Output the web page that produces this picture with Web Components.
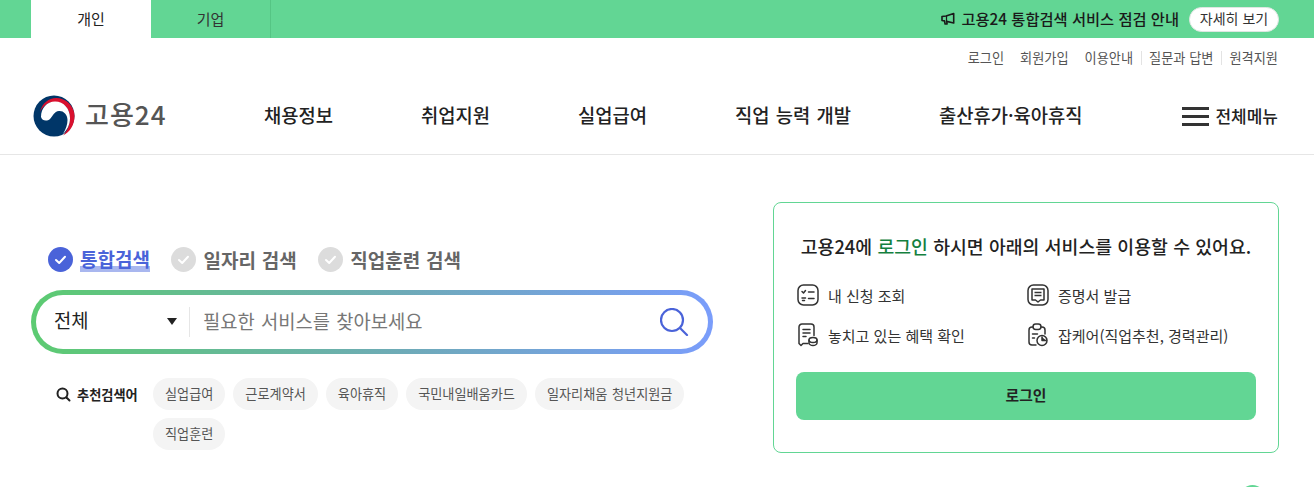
<!DOCTYPE html>
<html lang="ko">
<head>
<meta charset="utf-8">
<title>고용24</title>
<style>
  html, body { margin: 0; height: 487px; overflow: hidden; background: #fff; }
  body { font-family: "Noto Sans CJK KR", "Noto Sans", sans-serif; color: #222; }
</style>
</head>
<body>
<top-bar></top-bar>
<util-links></util-links>
<main-header></main-header>
<main-section>
  <search-panel></search-panel>
  <login-card></login-card>
</main-section>
<float-button></float-button>

<script>
class TopBar extends HTMLElement {
  connectedCallback() {
    this.attachShadow({ mode: 'open' }).innerHTML = `
      <style>
        :host { display: flex; height: 38px; background: #62d694; padding: 0 35px 0 31px; align-items: stretch; justify-content: space-between; }
        .tabs { display: flex; }
        .tab { width: 120px; display: flex; align-items: center; justify-content: center; font-size: 15px; color: #333; padding-bottom: 2px; box-sizing: border-box; }
        .tab.on { background: #fff; color: #222; }
        .tab.off { border-right: 1px solid #55c584; }
        .notice { display: flex; align-items: center; font-size: 15.3px; font-weight: 500; color: #1a1a1a; }
        .notice span { padding-bottom: 2px; }
        svg { margin-right: 5px; }
        button { margin-left: 10px; height: 25px; width: 90px; padding: 0 0 2px; border: 1px solid #dfe6e2; border-radius: 13px; background: #fff; font: inherit; font-weight: 400; font-size: 14px; color: #333; }
      </style>
      <div class="tabs"><div class="tab on">개인</div><div class="tab off">기업</div></div>
      <div class="notice">
        <svg width="15" height="14" viewBox="0 0 15 14" fill="none" stroke="#1a1a1a" stroke-width="1.6" stroke-linejoin="round">
          <path d="M1 4.500v4l2.500.4.6 3.100h2l-.4-2.600 7 1.600V1.500L5 4z"/><path d="M5.500 4v5.500" stroke-width="1.200"/>
        </svg>
        <span>고용24 통합검색 서비스 점검 안내</span><button>자세히 보기</button>
      </div>`;
  }
}

class UtilLinks extends HTMLElement {
  connectedCallback() {
    this.attachShadow({ mode: 'open' }).innerHTML = `
      <style>
        :host { display: flex; justify-content: flex-end; align-items: center; height: 40px; padding-right: 36px; font-size: 13.2px; color: #555; }
        a { color: inherit; text-decoration: none; margin-left: 16px; line-height: 14px; }
        a.sep { margin-left: 8px; padding-left: 7px; border-left: 1px solid #e3e3e3; }
      </style>
      <a>로그인</a><a>회원가입</a><a>이용안내</a><a class="sep">질문과 답변</a><a class="sep">원격지원</a>`;
  }
}

class MainHeader extends HTMLElement {
  connectedCallback() {
    this.attachShadow({ mode: 'open' }).innerHTML = `
      <style>
        :host { display: flex; align-items: center; height: 76px; padding: 0 36px 0 33px; border-bottom: 1px solid #e6e6e6; }
        .logo { display: flex; align-items: center; width: 231px; font-size: 26px; font-weight: 500; color: #555; letter-spacing: 1px; }
        .logo svg { margin-right: 10px; }
        .logo span { padding-bottom: 5px; }
        nav { display: flex; gap: 88px; flex: 1; font-size: 18.75px; font-weight: 500; color: #222; padding-bottom: 4px; word-spacing: 1px; }
        .all { display: flex; align-items: center; font-size: 17px; font-weight: 500; color: #222; }
        .all span { padding-bottom: 2px; }
        .all i { display: block; width: 27px; height: 19px; margin-right: 6px; border-top: 3px solid #333; border-bottom: 3px solid #333; box-sizing: border-box; position: relative; }
        .all i::after { content: ""; position: absolute; left: 0; right: 0; top: 5px; height: 3px; background: #333; }
      </style>
      <div class="logo">
        <svg width="42" height="42" viewBox="0 0 42 42">
          <circle cx="21" cy="21" r="20.5" fill="#003668"/>
          <path d="M7 17C9 8 16 3 23 3 33 3 41.500 11 41.500 21 41.500 30 37 37 30 40.500 35 35 37 29 37 23 37 13 30 7 21 7 15 7 10 11 7 17z" fill="#d9102e"/>
          <path d="M8 22C8 13 14 6.500 22 6.500 31 6.500 37 14 37 23 37 30 34 35 30 39 33 34 34.500 29 34.500 25 34.500 19 30 15.500 26 16 21 16.500 20 21 17 24 14 26.500 9 26 8 22z" fill="#fff"/>
        </svg>
        <span>고용24</span>
      </div>
      <nav><span>채용정보</span><span>취업지원</span><span>실업급여</span><span>직업 능력 개발</span><span>출산휴가·육아휴직</span></nav>
      <div class="all"><i></i><span>전체메뉴</span></div>`;
  }
}

class MainSection extends HTMLElement {
  connectedCallback() {
    this.attachShadow({ mode: 'open' }).innerHTML = `
      <style>
        :host { display: grid; grid-template-columns: 679px 506px; column-gap: 61px; align-items: start; padding: 47px 0 0 33px; }
      </style>
      <slot></slot>`;
  }
}

class SearchPanel extends HTMLElement {
  connectedCallback() {
    const chips = ['실업급여', '근로계약서', '육아휴직', '국민내일배움카드', '일자리채움 청년지원금', '직업훈련'];
    this.attachShadow({ mode: 'open' }).innerHTML = `
      <style>
        :host { display: block; padding-top: 42px; }
        .types { display: flex; align-items: center; height: 30px; margin: 0 0 16px 15px; gap: 21.500px; font-size: 19px; font-weight: 700; color: #666; word-spacing: .6px; }
        .type { display: flex; align-items: center; gap: 7px; }
        .type svg { flex: none; }
        .on span { color: #4a63d9; background: linear-gradient(transparent 78%, #a9b7ef 78%); line-height: 26px; }
        .box { height: 64px; box-sizing: border-box; border: 5px solid transparent; border-radius: 32px; margin: 0 -1px 0 -2px;
          background: linear-gradient(#fff, #fff) padding-box, linear-gradient(90deg, #5ccb71 0%, #6eaab8 55%, #7a9dfb 100%) border-box;
          display: flex; align-items: center; }
        .sel { width: 123px; padding: 0 12px 0 18px; display: flex; align-items: center; justify-content: space-between; font-size: 18.75px; color: #222; border-right: 1px solid #e6e6e6; height: 30px; }
        .sel span { padding-bottom: 5px; }
        .sel b { width: 0; height: 0; border: 5px solid transparent; border-top: 7px solid #222; border-bottom: 0; margin-top: -1px; }
        .ph { flex: 1; padding: 0 0 4px 13px; font-size: 18.75px; color: #777; word-spacing: 1px; }
        .glass { margin-right: 19px; display: block; }
        .rec { display: flex; margin: 24px 0 0 23px; align-items: flex-start; }
        .label { display: flex; align-items: center; gap: 6px; height: 32px; width: 97px; flex: none; font-size: 13.2px; font-weight: 700; color: #222; white-space: nowrap; }
        .chips { display: flex; flex-wrap: wrap; gap: 8px; width: 550px; }
        .chip { height: 32px; line-height: 32px; padding: 0 12px; border-radius: 16px; background: #f4f4f4; font-size: 13.15px; color: #555; word-spacing: 1px; }
      </style>
      <div class="types">
        <div class="type on">${this.check('#4a63d9', '#fff')}<span>통합검색</span></div>
        <div class="type">${this.check('#dcdcdc', '#fff')}<span>일자리 검색</span></div>
        <div class="type">${this.check('#dcdcdc', '#fff')}<span>직업훈련 검색</span></div>
      </div>
      <div class="box">
        <div class="sel"><span>전체</span><b></b></div>
        <div class="ph">필요한 서비스를 찾아보세요</div>
        <svg class="glass" width="29" height="28" viewBox="0 0 29 28" fill="none" stroke="#4a63d9" stroke-width="2.200" stroke-linecap="round">
          <circle cx="12" cy="12" r="11"/><path d="M20.500 20.500l6.500 6.500"/>
        </svg>
      </div>
      <div class="rec">
        <div class="label">
          <svg width="15" height="15" viewBox="0 0 15 15" fill="none" stroke="#222" stroke-width="2" stroke-linecap="round"><circle cx="6.500" cy="6.500" r="5"/><path d="M10.500 10.500l3 3"/></svg>
          추천검색어
        </div>
        <div class="chips">${chips.map(c => `<span class="chip">${c}</span>`).join('')}</div>
      </div>`;
  }
  check(bg, fg) {
    return `<svg width="25" height="25" viewBox="0 0 25 25"><circle cx="12.500" cy="12.500" r="12.500" fill="${bg}"/><path d="M8 13l3.200 3L17 9.800" fill="none" stroke="${fg}" stroke-width="2" stroke-linecap="round" stroke-linejoin="round"/></svg>`;
  }
}

class LoginCard extends HTMLElement {
  connectedCallback() {
    this.attachShadow({ mode: 'open' }).innerHTML = `
      <style>
        :host { display: block; height: 251px; box-sizing: border-box; border: 1px solid #62d694; border-radius: 8px; padding: 0 22px; }
        h2 { margin: 29px 0 0; height: 28px; line-height: 28px; text-align: center; font-size: 18.3px; font-weight: 500; color: #222; white-space: nowrap; word-spacing: .2px; }
        h2 em { font-style: normal; color: #14803f; }
        ul { list-style: none; margin: 24px 0 0 1px; padding: 0; display: grid; grid-template-columns: 230px 1fr; row-gap: 18px; font-size: 15px; color: #333; }
        li { display: flex; align-items: center; gap: 9px; height: 22px; }
        svg { flex: none; }
        button { display: block; width: 100%; height: 48px; margin-top: 26px; padding: 0 0 3px; border: 0; border-radius: 8px; background: #62d694; font: inherit; font-size: 14.8px; font-weight: 700; color: #222; }
      </style>
      <h2>고용24에 <em>로그인</em> 하시면 아래의 서비스를 이용할 수 있어요.</h2>
      <ul>
        <li>
          <svg width="22" height="22" viewBox="0 0 22 22" fill="none" stroke="#333" stroke-width="1.500" stroke-linecap="round" stroke-linejoin="round">
            <rect x="1" y="1" width="20" height="20" rx="5.500"/><path d="M5 7.500l1.500 1.500 2-2.500M11.500 8h5.500M5 14h3.500M11.500 14.500h5.500M5.500 16.500h2"/>
          </svg>내 신청 조회</li>
        <li>
          <svg width="22" height="22" viewBox="0 0 22 22" fill="none" stroke="#333" stroke-width="1.500" stroke-linejoin="round">
            <rect x="1" y="1" width="20" height="20" rx="5.500"/><path d="M5 5h12v11h-3.500L11 18l-2.500-2H5zM7.500 8.500h7M7.500 11.500h7"/>
          </svg>증명서 발급</li>
        <li>
          <svg width="22" height="24" viewBox="0 0 22 24" fill="none" stroke="#333" stroke-width="1.500" stroke-linecap="round" stroke-linejoin="round">
            <path d="M11 20.500H6L4 22.500 2 20.500V4a3 3 0 0 1 3-3h9a3 3 0 0 1 3 3v8.500M6 6.500h7M6 10h7M6 13.500h3"/><ellipse cx="16" cy="17" rx="4" ry="2.500"/><path d="M12 17v3c0 1.300 1.800 2.500 4 2.500s4-1.200 4-2.500v-3"/>
          </svg>놓치고 있는 혜택 확인</li>
        <li>
          <svg width="22" height="24" viewBox="0 0 22 24" fill="none" stroke="#333" stroke-width="1.500" stroke-linecap="round" stroke-linejoin="round">
            <path d="M9 22H5a3 3 0 0 1-3-3V7a3 3 0 0 1 3-3h1M14 4h1a3 3 0 0 1 3 3v4"/><rect x="6" y="1" width="8" height="5.500" rx="2.700"/><path d="M5.500 11h5M5.500 15h2"/><circle cx="15" cy="17.500" r="5"/><path d="M15 14v3.500h4" fill="#333"/>
          </svg>잡케어(직업추천, 경력관리)</li>
      </ul>
      <button>로그인</button>`;
  }
}

class FloatButton extends HTMLElement {
  connectedCallback() {
    this.attachShadow({ mode: 'open' }).innerHTML = `
      <style>
        :host { position: fixed; left: 1240px; top: 485px; width: 25px; height: 25px; border-radius: 50%; background: #62d694; }
      </style>`;
  }
}

customElements.define('top-bar', TopBar);
customElements.define('util-links', UtilLinks);
customElements.define('main-header', MainHeader);
customElements.define('main-section', MainSection);
customElements.define('search-panel', SearchPanel);
customElements.define('login-card', LoginCard);
customElements.define('float-button', FloatButton);
</script>
</body>
</html>
